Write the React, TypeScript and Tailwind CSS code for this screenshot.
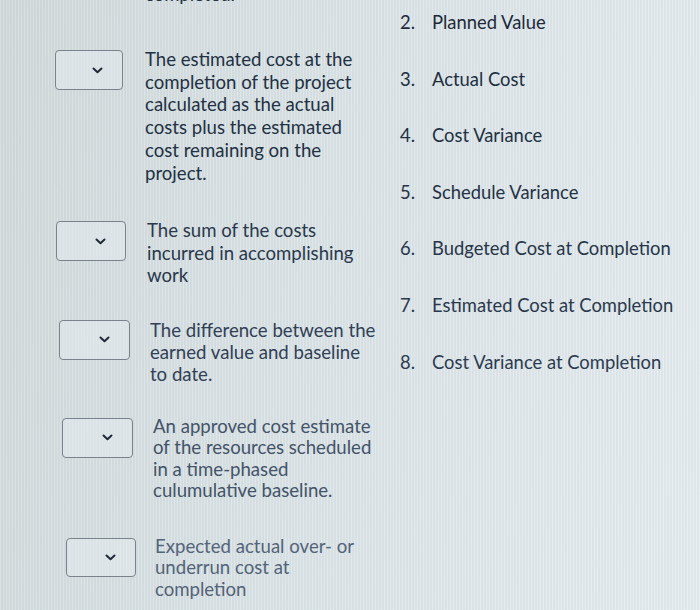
import React from "react";

type Item = { lines: string[]; wrap: string; box: string; text: string; color: string };

const items: Item[] = [
  {
    lines: ["The estimated cost at the", "completion of the project", "calculated as the actual", "costs plus the estimated", "cost remaining on the", "project."],
    wrap: "mt-[50px] ml-[55px]",
    box: "w-[68px] h-[40px]",
    text: "ml-[22px] -mt-[2px] leading-[22.7px]",
    color: "text-[#223043]",
  },
  {
    lines: ["The sum of the costs", "incurred in accomplishing", "work"],
    wrap: "mt-[37px] ml-[56px]",
    box: "w-[70px] h-[40px]",
    text: "ml-[21px] -mt-[2px] leading-[22.5px]",
    color: "text-[#2a384b]",
  },
  {
    lines: ["The difference between the", "earned value and baseline", "to date."],
    wrap: "mt-[33px] ml-[59px]",
    box: "w-[71px] h-[40px]",
    text: "ml-[20px] -mt-[1px] leading-[22px]",
    color: "text-[#314055]",
  },
  {
    lines: ["An approved cost estimate", "of the resources scheduled", "in a time-phased", "culumulative baseline."],
    wrap: "mt-[33px] ml-[62px]",
    box: "w-[71px] h-[40px]",
    text: "ml-[20px] -mt-[2px] leading-[21.5px]",
    color: "text-[#435368]",
  },
  {
    lines: ["Expected actual over- or", "underrun cost at", "completion"],
    wrap: "mt-[36px] ml-[66px]",
    box: "w-[70px] h-[39px]",
    text: "ml-[19px] -mt-[2px] leading-[21.5px]",
    color: "text-[#536378]",
  },
];

const options = [
  { n: "2.", label: "Planned Value", color: "text-[#1d2939]" },
  { n: "3.", label: "Actual Cost", color: "text-[#202e3e]" },
  { n: "4.", label: "Cost Variance", color: "text-[#223042]" },
  { n: "5.", label: "Schedule Variance", color: "text-[#243244]" },
  { n: "6.", label: "Budgeted Cost at Completion", color: "text-[#263547]" },
  { n: "7.", label: "Estimated Cost at Completion", color: "text-[#29384b]" },
  { n: "8.", label: "Cost Variance at Completion", color: "text-[#2c3b4f]" },
];

function Chevron() {
  return (
    <svg width="11" height="7" viewBox="0 0 11 7" fill="none">
      <path d="M1.5 1.5 L5.5 5.2 L9.5 1.5" stroke="#1f2937" strokeWidth="2" strokeLinecap="round" strokeLinejoin="round" />
    </svg>
  );
}

export default function App() {
  return (
    <div
      className="relative w-[700px] h-[610px] overflow-hidden bg-[linear-gradient(100deg,#d3dcdd_0%,#dae3e6_35%,#e1e9ed_70%,#e6edf1_100%)]"
      style={{ fontFamily: "Lato, 'Open Sans', sans-serif" }}
    >
      <div className="absolute inset-0 bg-[repeating-linear-gradient(90deg,rgba(255,255,255,0.10)_0px,rgba(255,255,255,0.10)_1px,rgba(0,0,0,0.03)_1px,rgba(0,0,0,0.03)_3px)] pointer-events-none" />
      <div className="relative flex">
        <div className="w-[392px] flex flex-col">
          <div className="h-0">
            <div className="ml-[145px] -mt-[17px] text-[18.5px] leading-[23px] text-[#243244]">completed.</div>
          </div>
          {items.map((it, i) => (
            <div key={i} className={`flex items-start ${it.wrap}`}>
              <div className={`${it.box} shrink-0 rounded-[4px] border-[1.5px] border-[#7a828b] bg-[#e3eaed]/60 flex items-center justify-end pr-[19px]`}>
                <Chevron />
              </div>
              <div className={`${it.text} ${it.color} text-[18.6px]`}>
                {it.lines.map((l, j) => (
                  <div key={j} className="whitespace-nowrap">{l}</div>
                ))}
              </div>
            </div>
          ))}
        </div>
        <div className="flex flex-col pt-[11px] ml-[8px]">
          {options.map((o, i) => (
            <div key={i} className={`flex h-[56.6px] items-start text-[18.4px] leading-[23px] ${o.color}`}>
              <span className="w-[32px] shrink-0">{o.n}</span>
              <span className="whitespace-nowrap">{o.label}</span>
            </div>
          ))}
        </div>
      </div>
    </div>
  );
}
